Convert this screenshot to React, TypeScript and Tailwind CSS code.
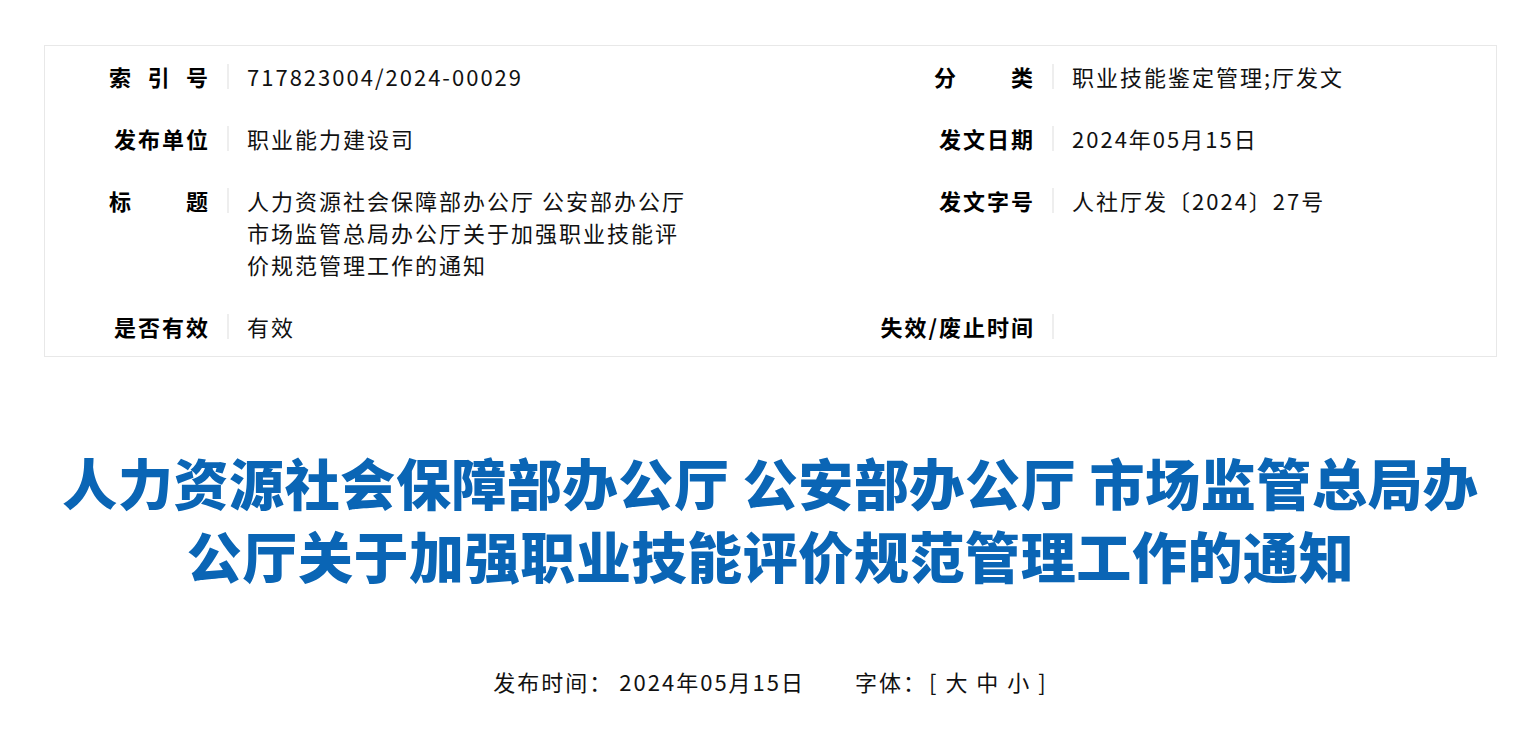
const font = "font-['Microsoft_YaHei','Noto_Sans_CJK_SC',sans-serif]";

type Row = {
  left: { label: string[]; value: string[] };
  right: { label: string[]; value: string[] };
};

const rows: Row[] = [
  {
    left: { label: ["索", "引", "号"], value: ["717823004/2024-00029"] },
    right: { label: ["分", "类"], value: ["职业技能鉴定管理;厅发文"] },
  },
  {
    left: { label: ["发布单位"], value: ["职业能力建设司"] },
    right: { label: ["发文日期"], value: ["2024年05月15日"] },
  },
  {
    left: {
      label: ["标", "题"],
      value: ["人力资源社会保障部办公厅 公安部办公厅", "市场监管总局办公厅关于加强职业技能评", "价规范管理工作的通知"],
    },
    right: { label: ["发文字号"], value: ["人社厅发〔2024〕27号"] },
  },
  {
    left: { label: ["是否有效"], value: ["有效"] },
    right: { label: ["失效/废止时间"], value: [] },
  },
];

function Cell({
  label,
  value,
  labelWidth,
}: {
  label: string[];
  value: string[];
  labelWidth: string;
}) {
  return (
    <div className="flex items-start">
      <div className={`${labelWidth} flex shrink-0 justify-end`}>
        <div
          className={`flex whitespace-nowrap font-bold text-black ${
            label.length > 1 ? "w-[101px] justify-between" : ""
          }`}
        >
          {label.map((c) => (
            <span key={c}>{c}</span>
          ))}
        </div>
      </div>
      <div className="ml-[17px] mr-[18px] mt-[4px] h-[25px] w-[2px] shrink-0 bg-[#eeeeee]" />
      <div className="w-[448px] text-[#111]">
        {value.map((line) => (
          <div key={line} className="whitespace-nowrap">
            {line}
          </div>
        ))}
      </div>
    </div>
  );
}

export default function App() {
  return (
    <div className={`${font} min-h-screen bg-white pt-[45px]`}>
      <div className="ml-[44px] w-[1453px]">
        <div className="border border-[#e8e8e8] text-[22px] leading-[32px] tracking-[2px]">
          {rows.map((row, i) => (
            <div key={i} className="flex py-[15px] first:pt-[14px] last:pb-[14px]">
              <div className="w-[725px] shrink-0">
                <Cell label={row.left.label} value={row.left.value} labelWidth="w-[165px]" />
              </div>
              <div className="flex-1">
                <Cell label={row.right.label} value={row.right.value} labelWidth="w-[265px]" />
              </div>
            </div>
          ))}
        </div>

        <h1 className="mt-[88px] text-center text-[55px] font-black leading-[73px] tracking-[0.6px] text-[#0a65b5]">
          人力资源社会保障部办公厅 公安部办公厅 市场监管总局办公厅关于加强职业技能评价规范管理工作的通知
        </h1>

        <div className="mt-[74px] flex justify-center text-[22px] leading-[32px] tracking-[2px] text-[#111]">
          <span>发布时间：</span>
          <span className="ml-[6px]">2024年05月15日</span>
          <span className="ml-[50px]">字体：</span>
          <span className="ml-[2px]">[ 大 中 小 ]</span>
        </div>
      </div>
    </div>
  );
}
